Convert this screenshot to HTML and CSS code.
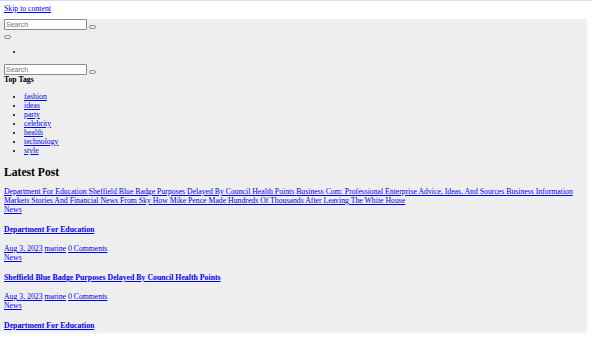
FILE: index.html
```html
<!DOCTYPE html>
<html lang="en">
<head>
    <meta charset="UTF-8">
    <meta name="viewport" content="width=device-width, initial-scale=1.0">
    <title>Latest Post</title>
    <link rel="stylesheet" href="styles.css">
</head>
<body>
    <a class="skip-link" href="#content">Skip to content</a>
    <div class="page">
        <header class="site-header">
            <form class="search-form" action="" method="get">
                <input type="search" name="s" placeholder="Search">
                <button type="submit"></button>
            </form>
            <button class="menu-toggle" type="button"></button>
            <ul class="menu">
                <li></li>
            </ul>
        </header>

        <aside class="sidebar">
            <form class="search-form" action="" method="get">
                <input type="search" name="s" placeholder="Search">
                <button type="submit"></button>
            </form>
            <div class="widget-title">Top Tags</div>
            <ul class="tags">
                <li><a href="#">fashion</a></li>
                <li><a href="#">ideas</a></li>
                <li><a href="#">party</a></li>
                <li><a href="#">celebrity</a></li>
                <li><a href="#">health</a></li>
                <li><a href="#">technology</a></li>
                <li><a href="#">style</a></li>
            </ul>
        </aside>

        <main id="content" class="content">
            <h2>Latest Post</h2>
            <div class="ticker"><a href="#">Department For Education </a><a href="#">Sheffield Blue Badge Purposes Delayed By Council Health Points </a><a href="#">Business Com: Professional Enterprise Advice, Ideas, And Sources </a><a href="#">Business Information Markets Stories And Financial News From Sky </a><a href="#">How Mike Pence Made Hundreds Of Thousands After Leaving The White House</a></div>

            <article class="post">
                <div class="cat"><a href="#">News</a></div>
                <h4><a href="#">Department For Education</a></h4>
                <div class="meta">
                    <a href="#">Aug 3, 2023</a>
                    <a href="#">marine</a>
                    <a href="#">0 Comments</a>
                </div>
            </article>
            <article class="post">
                <div class="cat"><a href="#">News</a></div>
                <h4><a href="#">Sheffield Blue Badge Purposes Delayed By Council Health Points</a></h4>
                <div class="meta">
                    <a href="#">Aug 3, 2023</a>
                    <a href="#">marine</a>
                    <a href="#">0 Comments</a>
                </div>
            </article>
            <article class="post">
                <div class="cat"><a href="#">News</a></div>
                <h4><a href="#">Department For Education</a></h4>
                <div class="meta">
                    <a href="#">Aug 3, 2023</a>
                    <a href="#">marine</a>
                    <a href="#">0 Comments</a>
                </div>
            </article>
        </main>
    </div>
</body>
</html>
```

FILE: styles.css
```css
html {
    overflow: hidden;
}
body {
    margin: 0;
    border-top: 1px solid #dcd9ef;
    font-family: 'Liberation Serif', 'Times New Roman', serif;
    font-size: 7.75px;
    line-height: 9px;
    color: #000;
}
a {
    color: #0000ee;
}
.skip-link {
    display: inline-block;
    margin: 3px 4px 6px;
}
.page {
    width: 578px;
    height: 313px;
    overflow: hidden;
    padding: 0 4px;
    background-color: #eeeeee;
    border-right: 2px solid #f7f7f7;
    border-bottom: 2px solid #f7f7f7;
}
.search-form {
    display: flex;
    align-items: flex-end;
    gap: 2px;
}
.search-form input {
    width: 83px;
    height: 11px;
    box-sizing: border-box;
    margin: 0;
    padding: 0 1px;
    border: 1px solid #8a8a8a;
    border-radius: 1px;
    background-color: #fff;
    font-family: 'Liberation Sans', Arial, sans-serif;
    font-size: 7px;
}
.search-form input::placeholder {
    color: #757575;
}
.search-form button,
.menu-toggle {
    width: 7px;
    height: 4px;
    margin: 0 0 1px;
    padding: 0;
    border: 1px solid #8f8f8f;
    border-radius: 2px;
    background-color: #efefef;
}
.menu-toggle {
    display: block;
    margin: 5px 0 0;
}
ul {
    margin: 8px 0;
    padding-left: 20px;
}
.menu li {
    height: 9px;
}
.widget-title {
    font-weight: bold;
}
.content h2 {
    margin: 11px 0 7px;
    font-size: 11.6px;
    line-height: 14px;
}
.post h4 {
    margin: 11px 0 9px;
    font-size: 7.8px;
    line-height: 10px;
}
```
